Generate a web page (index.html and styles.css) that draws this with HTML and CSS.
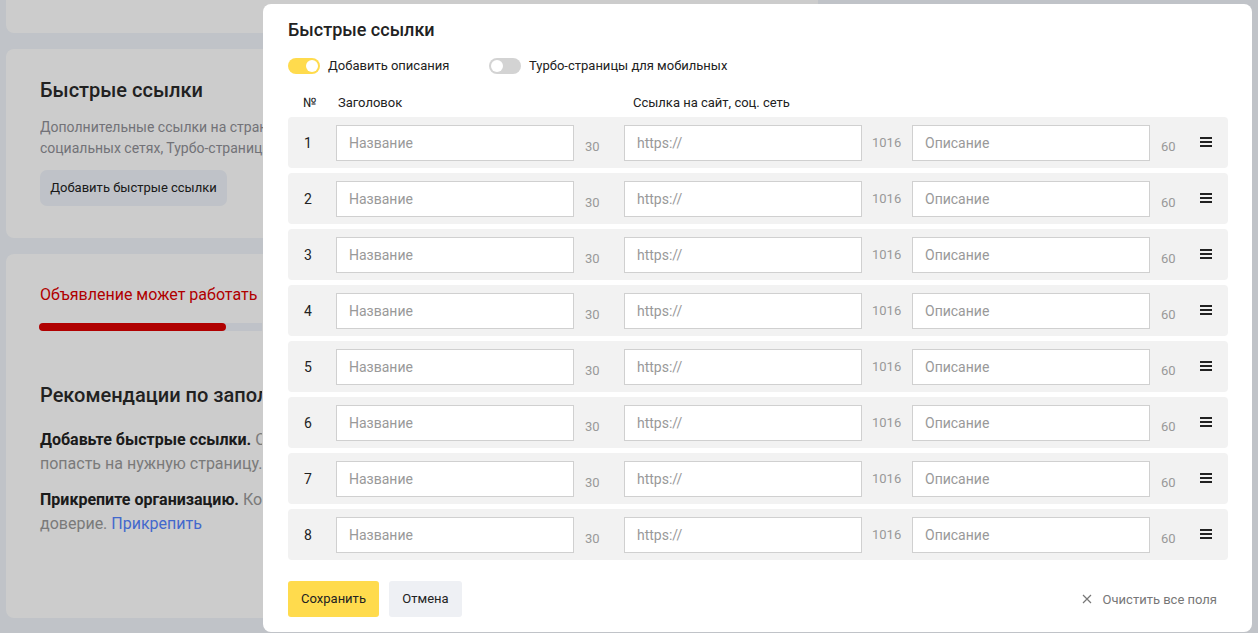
FILE: index.html
```html
<!DOCTYPE html>
<html lang="ru">
<head>
<meta charset="utf-8">
<title>Быстрые ссылки</title>
<link rel="stylesheet" href="styles.css">
</head>
<body>
<div class="page">
  <div class="card card-top"></div>
  <div class="card card-links">
    <div class="clip">
      <h2 class="card-title">Быстрые ссылки</h2>
      <p class="card-desc">Дополнительные ссылки на страницы сайта, страницы в<br>социальных сетях, Турбо-страницы и другие ресурсы</p>
      <button class="btn-add">Добавить быстрые ссылки</button>
    </div>
  </div>
  <div class="card card-rec">
    <div class="clip">
      <p class="warn">Объявление может работать плохо, заполните рекомендуемые поля</p>
      <div class="progress"><div class="progress-fill"></div></div>
      <h2 class="rec-title">Рекомендации по заполнению</h2>
      <p class="rec"><b>Добавьте быстрые ссылки.</b> Они помогут пользователям быстрее<br>попасть на нужную страницу.</p>
      <p class="rec"><b>Прикрепите организацию.</b> Контакты и адрес вызывают<br>доверие. <a class="link">Прикрепить</a></p>
    </div>
  </div>
</div>
<div class="overlay"></div>

<div class="modal">
  <h1 class="modal-title">Быстрые ссылки</h1>
  <div class="toggles">
    <label class="toggle-item"><span class="toggle on"><span class="knob"></span></span>Добавить описания</label>
    <label class="toggle-item"><span class="toggle"><span class="knob"></span></span>Турбо-страницы для мобильных</label>
  </div>
  <div class="head">
    <span class="h-num">№</span>
    <span class="h-title">Заголовок</span>
    <span class="h-url">Ссылка на сайт, соц. сеть</span>
  </div>
  <div class="rows">
    <div class="row"><span class="num">1</span><span class="field">Название</span><span class="cnt low">30</span><span class="field">https://</span><span class="cnt">1016</span><span class="field">Описание</span><span class="cnt low">60</span><span class="drag"><i></i><i></i><i></i></span></div>
    <div class="row"><span class="num">2</span><span class="field">Название</span><span class="cnt low">30</span><span class="field">https://</span><span class="cnt">1016</span><span class="field">Описание</span><span class="cnt low">60</span><span class="drag"><i></i><i></i><i></i></span></div>
    <div class="row"><span class="num">3</span><span class="field">Название</span><span class="cnt low">30</span><span class="field">https://</span><span class="cnt">1016</span><span class="field">Описание</span><span class="cnt low">60</span><span class="drag"><i></i><i></i><i></i></span></div>
    <div class="row"><span class="num">4</span><span class="field">Название</span><span class="cnt low">30</span><span class="field">https://</span><span class="cnt">1016</span><span class="field">Описание</span><span class="cnt low">60</span><span class="drag"><i></i><i></i><i></i></span></div>
    <div class="row"><span class="num">5</span><span class="field">Название</span><span class="cnt low">30</span><span class="field">https://</span><span class="cnt">1016</span><span class="field">Описание</span><span class="cnt low">60</span><span class="drag"><i></i><i></i><i></i></span></div>
    <div class="row"><span class="num">6</span><span class="field">Название</span><span class="cnt low">30</span><span class="field">https://</span><span class="cnt">1016</span><span class="field">Описание</span><span class="cnt low">60</span><span class="drag"><i></i><i></i><i></i></span></div>
    <div class="row"><span class="num">7</span><span class="field">Название</span><span class="cnt low">30</span><span class="field">https://</span><span class="cnt">1016</span><span class="field">Описание</span><span class="cnt low">60</span><span class="drag"><i></i><i></i><i></i></span></div>
    <div class="row"><span class="num">8</span><span class="field">Название</span><span class="cnt low">30</span><span class="field">https://</span><span class="cnt">1016</span><span class="field">Описание</span><span class="cnt low">60</span><span class="drag"><i></i><i></i><i></i></span></div>
  </div>
  <div class="footer">
    <button class="btn btn-save">Сохранить</button>
    <button class="btn btn-cancel">Отмена</button>
    <span class="clear"><svg width="10" height="10" viewBox="0 0 10 10"><path d="M1 1L9 9M9 1L1 9" stroke="#777" stroke-width="1.2" fill="none"/></svg>Очистить все поля</span>
  </div>
</div>
</body>
</html>
```

FILE: styles.css
```css
* { box-sizing: border-box; }
html, body { margin: 0; padding: 0; }
body {
  width: 1258px;
  height: 633px;
  overflow: hidden;
  background: #f0f4fa;
  font-family: Roboto, "Open Sans", sans-serif;
  color: #222;
  position: relative;
}
.page {
  padding: 0 440px 0 6px;
  display: flex;
  flex-direction: column;
  gap: 16px;
}
.card {
  background: #fff;
  border-radius: 8px;
  overflow: hidden;
  white-space: nowrap;
}
.clip {
  width: 223px;
  overflow: hidden;
}
.card-top { height: 33px; border-radius: 0 0 8px 8px; }
.card-links { height: 189px; padding: 27px 34px 0; }
.card-title {
  margin: 0;
  font-size: 20px;
  line-height: 28px;
  font-weight: 500;
  color: #2a2a2a;
}
.card-desc {
  margin: 13px 0 0;
  font-size: 14px;
  line-height: 21px;
  color: #8f8f96;
}
.btn-add {
  margin-top: 11px;
  height: 36px;
  width: 187px;
  padding: 0;
  border: 0;
  border-radius: 7px;
  background: #eff3fa;
  font: 13px/36px Roboto, "Open Sans", sans-serif;
  color: #222;
}
.card-rec { height: 364px; padding: 29px 34px 0 33px; }
.warn {
  margin: 0 0 0 1px;
  font-size: 16px;
  line-height: 24px;
  color: #dd0000;
}
.progress {
  margin: 16px 0 0 0;
  height: 8px;
  width: 760px;
  border-radius: 4px;
  background: #eff3fa;
}
.progress-fill {
  width: 187px;
  height: 8px;
  border-radius: 4px;
  background: #dd0000;
}
.rec-title {
  margin: 50px 0 0 1px;
  font-size: 20px;
  line-height: 28px;
  font-weight: 500;
  color: #2a2a2a;
}
.rec {
  margin: 19px 0 0 1px;
  font-size: 16px;
  line-height: 24px;
  color: #999;
}
.rec + .rec { margin-top: 12px; }
.rec b { color: #222; font-weight: 700; }
.link { color: #5383ff; }
.overlay {
  position: absolute;
  inset: 0;
  background: rgba(0, 0, 0, 0.2);
}

.modal {
  position: absolute;
  left: 263px;
  top: 4px;
  width: 989px;
  height: 628px;
  background: #fff;
  border-radius: 8px;
  padding: 14px 24px 0 25px;
  font-size: 13px;
  color: #222;
}
.modal-title {
  margin: 0;
  font-size: 18px;
  line-height: 24px;
  font-weight: 500;
}
.toggles {
  margin-top: 14px;
  display: flex;
  align-items: center;
  height: 20px;
}
.toggle-item {
  display: flex;
  align-items: center;
  gap: 8px;
  flex: 0 0 201px;
  white-space: nowrap;
  line-height: 20px;
}
.toggle {
  flex: 0 0 32px;
  height: 16px;
  border-radius: 8px;
  background: #d3d3d3;
  display: flex;
  align-items: center;
  padding: 0 2px;
}
.toggle.on { background: #ffdb4d; justify-content: flex-end; }
.knob {
  width: 12px;
  height: 12px;
  border-radius: 50%;
  background: #fff;
}
.head {
  margin-top: 18px;
  display: flex;
  line-height: 18px;
  height: 18px;
}
.h-num { width: 50px; padding-left: 15px; }
.h-title { width: 295px; }
.rows {
  margin-top: 5px;
  display: flex;
  flex-direction: column;
  gap: 5px;
}
.row {
  height: 51px;
  background: #f2f2f2;
  border-radius: 4px;
  display: flex;
  align-items: center;
  padding: 0 16px 0 16px;
}
.num {
  width: 32px;
  font-size: 14px;
  color: #222;
}
.field {
  width: 238px;
  height: 36px;
  border: 1px solid #d0d0d0;
  background: #fff;
  padding: 0 12px;
  font-size: 14px;
  line-height: 34px;
  color: #999;
}
.cnt {
  width: 50px;
  padding-left: 10px;
  font-size: 13px;
  color: #999;
}
.cnt.low { padding-top: 7px; padding-left: 11px; }
.drag {
  width: 12px;
  display: flex;
  flex-direction: column;
  gap: 2px;
  margin-top: -1px;
}
.drag i {
  display: block;
  height: 2px;
  background: #222;
}
.footer {
  margin-top: 21px;
  display: flex;
  align-items: center;
  gap: 10px;
}
.btn {
  height: 36px;
  border: 0;
  border-radius: 3px;
  padding: 0;
  font: 13px/36px Roboto, "Open Sans", sans-serif;
  color: #222;
}
.btn-save { width: 91px; background: #ffdb4d; }
.btn-cancel { width: 73px; background: #eef0f4; }
.clear {
  margin-left: auto;
  margin-right: 11px;
  display: flex;
  align-items: center;
  gap: 11px;
  color: #777;
  font-size: 13px;
}
```
